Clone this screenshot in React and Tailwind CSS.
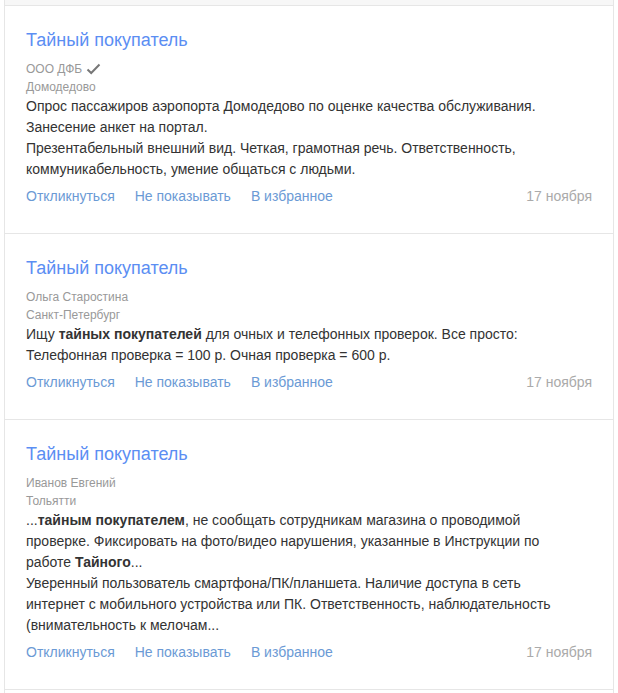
import React from 'react';

const vacancies = [
  {
    id: 1,
    title: 'Тайный покупатель',
    company: 'ООО ДФБ',
    verified: true,
    city: 'Домодедово',
    lines: [
      ['Опрос пассажиров аэропорта Домодедово по оценке качества обслуживания.'],
      ['Занесение анкет на портал.'],
      ['Презентабельный внешний вид. Четкая, грамотная речь. Ответственность,'],
      ['коммуникабельность, умение общаться с людьми.'],
    ],
    date: '17 ноября',
  },
  {
    id: 2,
    title: 'Тайный покупатель',
    company: 'Ольга Старостина',
    city: 'Санкт-Петербург',
    lines: [
      ['Ищу ', { b: 'тайных покупателей' }, ' для очных и телефонных проверок. Все просто:'],
      ['Телефонная проверка = 100 р. Очная проверка = 600 р.'],
    ],
    date: '17 ноября',
  },
  {
    id: 3,
    title: 'Тайный покупатель',
    company: 'Иванов Евгений',
    city: 'Тольятти',
    lines: [
      ['...', { b: 'тайным покупателем' }, ', не сообщать сотрудникам магазина о проводимой'],
      ['проверке. Фиксировать на фото/видео нарушения, указанные в Инструкции по'],
      ['работе ', { b: 'Тайного' }, '...'],
      ['Уверенный пользователь смартфона/ПК/планшета. Наличие доступа в сеть'],
      ['интернет с мобильного устройства или ПК. Ответственность, наблюдательность'],
      ['(внимательность к мелочам...'],
    ],
    date: '17 ноября',
  },
];

const CheckIcon = () => (
  <svg width="15" height="12" viewBox="0 0 15 12" className="ml-[4px] inline-block">
    <polyline points="1.5,6.5 5.2,10 13.5,1.5" fill="none" stroke="#777" strokeWidth="2" />
  </svg>
);

const VacancyCard = ({ item }) => (
  <div className="border-t border-[#e6e6e6] px-[21px] pt-[22px] pb-[27px]">
    <a className="block text-[18px] leading-[24px] text-[#5b8ef3]">{item.title}</a>

    <div className="mt-[8px] text-[12px] leading-[18px] text-[#999]">
      <div className="flex items-center">
        {item.company}
        {item.verified && <CheckIcon />}
      </div>
      <div>{item.city}</div>
    </div>

    {/* description */}
    <div className="text-[14px] leading-[21px] text-[#333]">
      {item.lines.map((line, i) => (
        <div key={i} className="whitespace-nowrap">
          {line.map((part, j) =>
            typeof part === 'string' ? <span key={j}>{part}</span> : <b key={j}>{part.b}</b>
          )}
        </div>
      ))}
    </div>

    <div className="mt-[6px] flex items-center text-[14px] leading-[20px]">
      <a className="text-[#6b9ad5]">Откликнуться</a>
      <a className="ml-[20px] text-[#6b9ad5]">Не показывать</a>
      <a className="ml-[20px] text-[#6b9ad5]">В избранное</a>
      <span className="ml-auto text-[#aaa]">{item.date}</span>
    </div>
  </div>
);

export default function App() {
  return (
    <div className="min-h-screen bg-white font-['Liberation_Sans',Arial,sans-serif]">
      <div className="mx-[4px] border-x border-[#e6e6e6]">
        <div className="h-[5px] bg-[#f7f7f7]"></div>
        {vacancies.map((v) => (
          <VacancyCard key={v.id} item={v} />
        ))}
        <div className="h-[10px] border-t border-[#e6e6e6]"></div>
      </div>
    </div>
  );
}
